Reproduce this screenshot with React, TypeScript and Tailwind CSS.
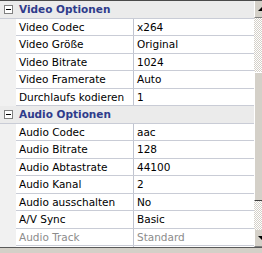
import React from "react";

type Row = { type: "cat"; label: string } | { type: "prop"; label: string; value: string; disabled?: boolean };

const rows: Row[] = [
  { type: "cat", label: "Video Optionen" },
  { type: "prop", label: "Video Codec", value: "x264" },
  { type: "prop", label: "Video Größe", value: "Original" },
  { type: "prop", label: "Video Bitrate", value: "1024" },
  { type: "prop", label: "Video Framerate", value: "Auto" },
  { type: "prop", label: "Durchlaufs kodieren", value: "1" },
  { type: "cat", label: "Audio Optionen" },
  { type: "prop", label: "Audio Codec", value: "aac" },
  { type: "prop", label: "Audio Bitrate", value: "128" },
  { type: "prop", label: "Audio Abtastrate", value: "44100" },
  { type: "prop", label: "Audio Kanal", value: "2" },
  { type: "prop", label: "Audio ausschalten", value: "No" },
  { type: "prop", label: "A/V Sync", value: "Basic" },
  { type: "prop", label: "Audio Track", value: "Standard", disabled: true },
  { type: "prop", label: "Untertitel", value: "Keine", disabled: true },
];

function MinusBox() {
  return (
    <div className="w-[9px] h-[9px] border border-[#808080] bg-white flex items-center justify-center">
      <div className="w-[5px] h-[1px] bg-black" />
    </div>
  );
}

export default function App() {
  return (
    <div
      className="w-[262px] h-[253px] bg-[#d4d0c8] overflow-hidden flex flex-col"
      style={{ fontFamily: '"DejaVu Sans", Verdana, sans-serif' }}
    >
      <div className="h-[248px] border-t border-[#4a4a4a] border-b border-b-[#5a5a5a] flex bg-white overflow-hidden">
        <div className="w-[254px] flex flex-col text-[10.5px] leading-none">
          {rows.map((r, i) =>
            r.type === "cat" ? (
              <div key={i} className="h-[17.5px] shrink-0 flex items-center bg-[#ebebeb] border-b border-[#c9ccd6]">
                <div className="w-[16px] flex justify-center pl-[1px]">
                  <MinusBox />
                </div>
                <span className="pl-[3px] font-bold text-[#2f3c8c]">{r.label}</span>
              </div>
            ) : (
              <div key={i} className="h-[17.5px] shrink-0 flex">
                <div className="w-[16px] bg-[#f1f1f1]" />
                <div className={`flex-1 flex border-b border-[#c9ccd6] ${r.disabled ? "text-[#8c8c8c]" : "text-black"}`}>
                  <div className="w-[118px] border-r border-[#c0c4d0] flex items-center pl-[3px] whitespace-nowrap overflow-hidden">
                    {r.label}
                  </div>
                  <div className="flex-1 flex items-center pl-[3px] whitespace-nowrap">{r.value}</div>
                </div>
              </div>
            )
          )}
        </div>
        <div className="w-[8px] flex flex-col bg-[repeating-conic-gradient(#d4d0c8_0_25%,#ffffff_0_50%)] bg-[length:2px_2px]">
          <div className="h-[17px] bg-[#d4d0c8] border-l border-l-white border-b border-b-[#808080] relative">
            <div className="absolute left-[3px] top-[6px] w-0 h-0 border-l-[4px] border-r-[4px] border-b-[4px] border-l-transparent border-r-transparent border-b-black" />
          </div>
          <div className="h-[54px]" />
          <div className="h-[129px] bg-[#d4d0c8] border-l border-l-white border-t border-t-white border-b border-b-[#404040]" />
          <div className="flex-1" />
          <div className="h-[17px] bg-[#d4d0c8] border-l border-l-white border-b border-b-[#808080] relative">
            <div className="absolute left-[3px] top-[6px] w-0 h-0 border-l-[4px] border-r-[4px] border-t-[4px] border-l-transparent border-r-transparent border-t-black" />
          </div>
        </div>
      </div>
    </div>
  );
}
